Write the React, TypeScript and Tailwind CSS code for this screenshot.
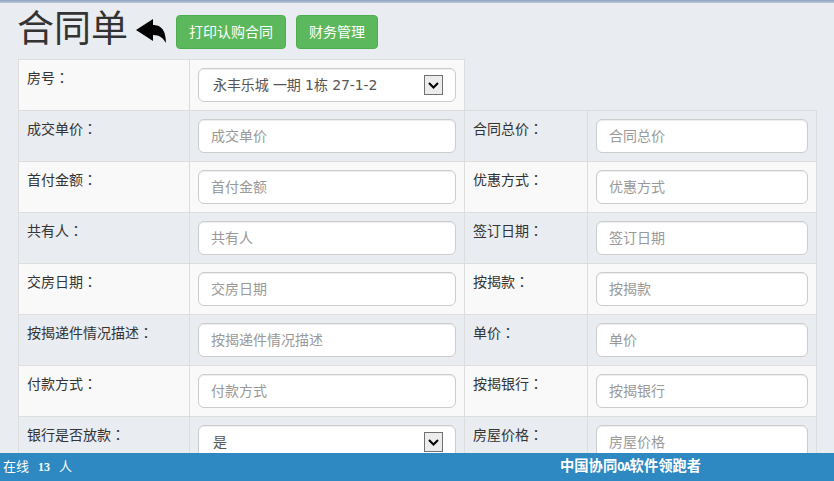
const FONT = "font-['Liberation_Sans','Noto_Sans_CJK_SC',sans-serif]"

const ROWS: { left: string; right: string; selectValue?: string }[] = [
  { left: "成交单价", right: "合同总价" },
  { left: "首付金额", right: "优惠方式" },
  { left: "共有人", right: "签订日期" },
  { left: "交房日期", right: "按揭款" },
  { left: "按揭递件情况描述", right: "单价" },
  { left: "付款方式", right: "按揭银行" },
  { left: "银行是否放款", right: "房屋价格", selectValue: "是" },
]

function Field({ placeholder }: { placeholder: string }) {
  return (
    <input
      placeholder={placeholder}
      className="block w-full h-[34px] px-3 text-sm text-[#555] bg-white border border-[#ccc] rounded-md shadow-[inset_0_1px_1px_rgba(0,0,0,0.075)] placeholder:text-[#999] outline-none"
    />
  )
}

function SelectBox({ value }: { value: string }) {
  return (
    <div className="relative h-[34px]">
      <select
        defaultValue={value}
        className="block w-full h-full pl-[14px] pr-8 text-sm tracking-[-0.1px] font-['DejaVu_Sans','Noto_Sans_CJK_SC',sans-serif] text-[#555] bg-white border border-[#ccc] rounded-md shadow-[inset_0_1px_1px_rgba(0,0,0,0.075)] appearance-none outline-none"
      >
        <option>{value}</option>
      </select>
      <span className="absolute right-[13px] top-[7px] w-[19px] h-5 flex items-center justify-center bg-[#ececec] border border-[#707070] pointer-events-none">
        <svg width="11" height="7" viewBox="0 0 11 7" fill="none" stroke="#000" strokeWidth="2">
          <path d="M1 1l4.500 4.500L10 1" />
        </svg>
      </span>
    </div>
  )
}

function Label({ text }: { text: string }) {
  return (
    <td className="border border-[#ddd] align-top pt-[7px] pl-2 pr-2 text-sm text-[#333] leading-5">
      {text}
      <span className="font-['Noto_Sans_CJK_TC',sans-serif]">：</span>
    </td>
  )
}

const inputCell = "border border-[#ddd] align-top p-2"

export default function App() {
  return (
    <div className={`${FONT} relative h-[481px] overflow-hidden bg-[#e9ecf1]`}>
      <div className="h-[3px] bg-gradient-to-b from-[#8fa3c0] to-[#bcc8da]" />

      {/* Header */}
      <div className="flex items-start pl-[17px] h-[56px]">
        <h1 className="text-[37px] leading-[54px] text-[#333] font-normal w-[119px] whitespace-nowrap">合同单</h1>
        <svg width="30" height="24" viewBox="0 0 30 24" className="mt-4" fill="#000">
          <path d="M0 11 17 0v6c7 0 13 4 13 18-3-5-6-8-13-8v6z" />
        </svg>
        <div className="flex gap-[10px] ml-[10px] mt-3">
          <button className="h-[34px] px-3 text-sm text-white bg-[#5cb85c] border border-[#4cae4c] rounded">打印认购合同</button>
          <button className="h-[34px] px-3 text-sm text-white bg-[#5cb85c] border border-[#4cae4c] rounded">财务管理</button>
        </div>
      </div>

      {/* Form table */}
      <table className="ml-[18px] w-[798px] table-fixed border-collapse">
        <colgroup>
          <col className="w-[171px]" />
          <col className="w-[275px]" />
          <col className="w-[123px]" />
          <col className="w-[229px]" />
        </colgroup>
        <tbody>
          <tr className="h-[51px] bg-[#f9f9f9]">
            <Label text="房号" />
            <td className={inputCell}>
              <SelectBox value="永丰乐城 一期 1栋 27-1-2" />
            </td>
          </tr>
          {ROWS.map((row, i) => (
            <tr key={row.left} className={i % 2 === 0 ? "h-[51px] bg-[#e9ecf1]" : "h-[51px] bg-[#f9f9f9]"}>
              <Label text={row.left} />
              <td className={inputCell}>
                {row.selectValue ? <SelectBox value={row.selectValue} /> : <Field placeholder={row.left} />}
              </td>
              <Label text={row.right} />
              <td className={inputCell}>
                <Field placeholder={row.right} />
              </td>
            </tr>
          ))}
        </tbody>
      </table>

      {/* Status bar */}
      <div className="absolute left-0 right-0 bottom-0 h-7 bg-[#2e88c1] text-white flex items-center text-[13px]">
        <span className="ml-[3px]">在线</span>
        <b className="ml-[9px] text-xs font-['Liberation_Serif',serif]">13</b>
        <span className="ml-[9px]">人</span>
        <b className="absolute left-[560px] text-[14.300px] font-bold">
          中国协同<span className="font-['Liberation_Mono',monospace] text-xs tracking-[-1px]">OA</span>软件领跑者
        </b>
      </div>
    </div>
  )
}
